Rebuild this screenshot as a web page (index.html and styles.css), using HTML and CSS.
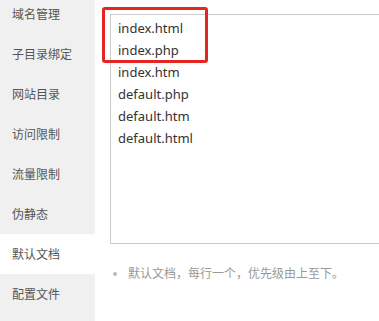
FILE: index.html
```html
<!DOCTYPE html>
<html lang="zh-CN">
<head>
  <meta charset="UTF-8">
  <meta name="viewport" content="width=device-width, initial-scale=1.0">
  <title>默认文档</title>
  <link rel="stylesheet" href="styles.css">
</head>
<body>

  <div class="layout">
    <ul class="side-menu">
      <li>域名管理</li>
      <li>子目录绑定</li>
      <li>网站目录</li>
      <li>访问限制</li>
      <li>流量限制</li>
      <li>伪静态</li>
      <li class="active">默认文档</li>
      <li>配置文件</li>
    </ul>

    <div class="content">
      <textarea class="index-files" spellcheck="false">index.html
index.php
index.htm
default.php
default.htm
default.html</textarea>
      <div class="highlight"></div>

      <ul class="help-list">
        <li>默认文档，每行一个，优先级由上至下。</li>
      </ul>
    </div>
  </div>

</body>
</html>
```

FILE: styles.css
```css
body {
  margin: 0;
  font-family: "Noto Sans", "Noto Sans CJK SC", sans-serif;
  background: #fff;
}

.layout {
  display: flex;
  height: 321px;
  overflow: hidden;
}

.side-menu {
  list-style: none;
  margin: -6px 0 0;
  padding: 0;
  width: 95px;
  flex-shrink: 0;
  background-color: #f0f0f1;
}

.side-menu li {
  height: 40px;
  line-height: 41px;
  padding-left: 12px;
  font-size: 12px;
  color: #555;
}

.side-menu li.active {
  background-color: #fff;
}

.content {
  position: relative;
  padding: 14px 0 0 15px;
  flex: 1;
  min-width: 0;
  overflow: hidden;
}

.index-files {
  display: block;
  box-sizing: border-box;
  width: calc(100% + 4px);
  height: 230px;
  margin: 0;
  padding: 2px 7px;
  border: 1px solid #ccc;
  font-family: "Noto Sans", "Noto Sans CJK SC", sans-serif;
  font-size: 13px;
  line-height: 22px;
  color: #333;
  resize: none;
  overflow: hidden;
  outline: none;
}

/* red marker round the first two entries */
.highlight {
  position: absolute;
  left: 7px;
  top: 7px;
  width: 100px;
  height: 50px;
  border: 3px solid #e52521;
  border-radius: 3px;
}

.help-list {
  margin: 20px 0 0;
  padding-left: 18px;
  font-size: 12px;
  line-height: 20px;
  color: #999;
}

.help-list li::marker {
  color: #bbb;
}
```
